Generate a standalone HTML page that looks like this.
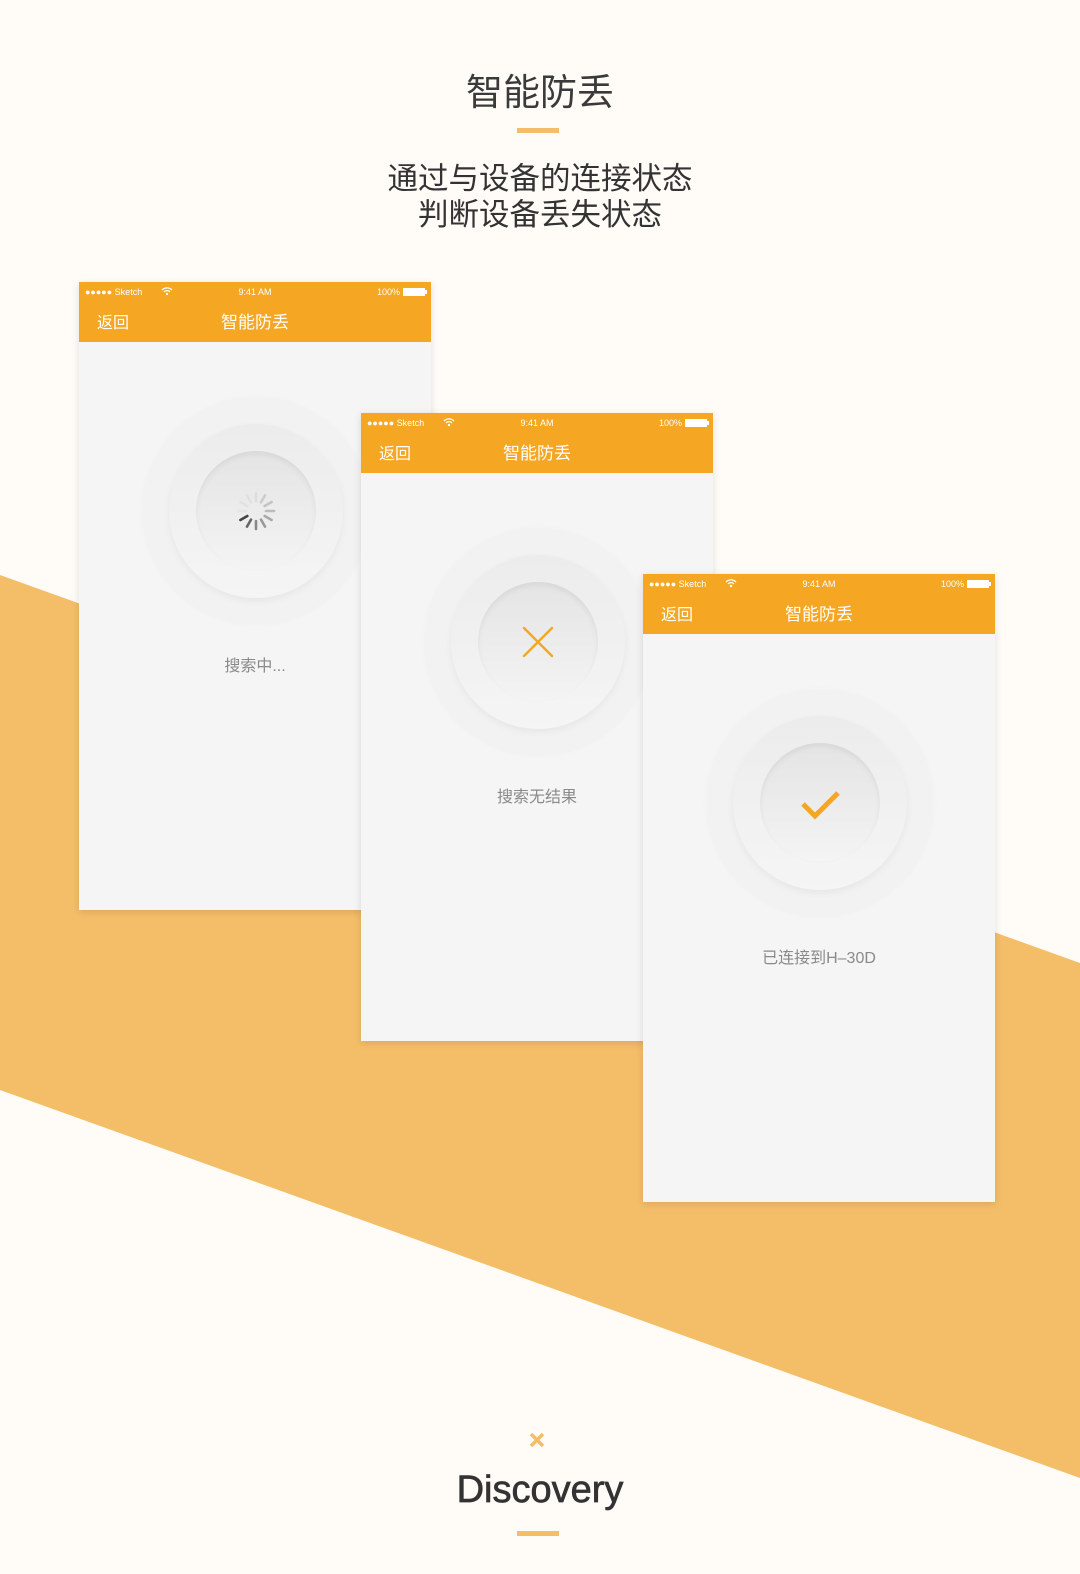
<!DOCTYPE html>
<html><head><meta charset="utf-8"><style>
*{margin:0;padding:0;box-sizing:border-box}
body{width:1080px;height:1574px;background:#fffcf8;position:relative;overflow:hidden;font-family:"Liberation Sans","Noto Sans CJK SC",sans-serif}
.abs{position:absolute}
.h1{left:0;width:1080px;top:68px;text-align:center;font-size:37px;color:#3a3a3a;line-height:50px}
.bar{width:42px;height:5px;background:#f5bd68}
.sub{left:0;width:1080px;top:161px;text-align:center;font-size:30.5px;color:#333;line-height:36px}
.phone{width:352px;height:628px;background:#f5f5f5;box-shadow:0 2px 8px rgba(0,0,0,0.12)}
.hdr{position:absolute;left:0;top:0;width:352px;height:60px;background:#f5a623;color:#fff}
.sb{position:absolute;top:4px;font-size:9px;line-height:12px}
.bat{display:inline-block;width:22px;height:8px;background:#fff;vertical-align:-1px;position:relative}
.bat:after{content:"";position:absolute;right:-2px;top:2px;width:1.5px;height:4px;background:#fff}
.back{position:absolute;left:18px;top:27px;font-size:16px}
.ttl{position:absolute;left:0;width:352px;text-align:center;top:26px;font-size:17px}
.c1,.c2,.c3{position:absolute;border-radius:50%}
.c1{width:228px;height:228px;left:63px;top:115px;background:#f2f2f2;box-shadow:0 0 6px rgba(0,0,0,0.02)}
.c2{width:174px;height:174px;left:90px;top:142px;background:linear-gradient(#ececec,#f5f5f5);box-shadow:0 3px 8px rgba(0,0,0,0.05)}
.c3{width:120px;height:120px;left:117px;top:169px;background:linear-gradient(#e4e4e4,#f4f4f4);box-shadow:inset 0 3px 6px rgba(0,0,0,0.06)}
.icon{position:absolute;left:117px;top:169px;width:120px;height:120px}
.lbl{position:absolute;left:0;width:352px;text-align:center;top:370px;font-size:16px;color:#8a8a8a}
</style></head><body>
<svg class="abs" style="left:0;top:0" width="1080" height="1574"><polygon points="0,575 1080,963 1080,1478 0,1090" fill="#f4be69"/></svg>
<div class="abs h1">智能防丢</div>
<div class="abs bar" style="left:517px;top:128px"></div>
<div class="abs sub">通过与设备的连接状态<br>判断设备丢失状态</div>

<div class="abs phone" style="left:79px;top:282px">
<div class="hdr"><span class="sb" style="left:6px">●●●●● Sketch</span><span class="sb" style="left:82px">
<svg width="12" height="10" viewBox="0 0 12 10"><path d="M1 4a7 7 0 0 1 10 0M3 6a4 4 0 0 1 6 0" stroke="#fff" stroke-width="1.3" fill="none"/><circle cx="6" cy="8" r="1.2" fill="#fff"/></svg></span>
<span class="sb" style="left:0;width:352px;text-align:center">9:41 AM</span><span class="sb" style="left:298px">100% <span class="bat"></span></span>
<span class="back">返回</span><span class="ttl">智能防丢</span></div>
<div class="c1"></div><div class="c2"></div><div class="c3"></div>
<svg class="icon" viewBox="0 0 120 120"><g stroke-width="2.6" stroke-linecap="round">
<line x1="60" y1="42" x2="60" y2="50" stroke="#ddd" transform="rotate(0 60 60)"/>
<line x1="60" y1="42" x2="60" y2="50" stroke="#ccc" transform="rotate(30 60 60)"/>
<line x1="60" y1="42" x2="60" y2="50" stroke="#c4c4c4" transform="rotate(60 60 60)"/>
<line x1="60" y1="42" x2="60" y2="50" stroke="#bbb" transform="rotate(90 60 60)"/>
<line x1="60" y1="42" x2="60" y2="50" stroke="#aaa" transform="rotate(120 60 60)"/>
<line x1="60" y1="42" x2="60" y2="50" stroke="#999" transform="rotate(150 60 60)"/>
<line x1="60" y1="42" x2="60" y2="50" stroke="#888" transform="rotate(180 60 60)"/>
<line x1="60" y1="42" x2="60" y2="50" stroke="#666" transform="rotate(210 60 60)"/>
<line x1="60" y1="42" x2="60" y2="50" stroke="#444" transform="rotate(240 60 60)"/>
<line x1="60" y1="42" x2="60" y2="50" stroke="#e4e4e4" transform="rotate(270 60 60)"/>
<line x1="60" y1="42" x2="60" y2="50" stroke="#e2e2e2" transform="rotate(300 60 60)"/>
<line x1="60" y1="42" x2="60" y2="50" stroke="#e0e0e0" transform="rotate(330 60 60)"/>
</g></svg>
<div class="lbl">搜索中...</div>
</div>

<div class="abs phone" style="left:361px;top:413px">
<div class="hdr"><span class="sb" style="left:6px">●●●●● Sketch</span><span class="sb" style="left:82px">
<svg width="12" height="10" viewBox="0 0 12 10"><path d="M1 4a7 7 0 0 1 10 0M3 6a4 4 0 0 1 6 0" stroke="#fff" stroke-width="1.3" fill="none"/><circle cx="6" cy="8" r="1.2" fill="#fff"/></svg></span>
<span class="sb" style="left:0;width:352px;text-align:center">9:41 AM</span><span class="sb" style="left:298px">100% <span class="bat"></span></span>
<span class="back">返回</span><span class="ttl">智能防丢</span></div>
<div class="c1"></div><div class="c2"></div><div class="c3"></div>
<svg class="icon" viewBox="0 0 120 120"><path d="M46 46L74 74M74 46L46 74" stroke="#f5a623" stroke-width="2.4" stroke-linecap="round"/></svg>
<div class="lbl">搜索无结果</div>
</div>

<div class="abs phone" style="left:643px;top:574px">
<div class="hdr"><span class="sb" style="left:6px">●●●●● Sketch</span><span class="sb" style="left:82px">
<svg width="12" height="10" viewBox="0 0 12 10"><path d="M1 4a7 7 0 0 1 10 0M3 6a4 4 0 0 1 6 0" stroke="#fff" stroke-width="1.3" fill="none"/><circle cx="6" cy="8" r="1.2" fill="#fff"/></svg></span>
<span class="sb" style="left:0;width:352px;text-align:center">9:41 AM</span><span class="sb" style="left:298px">100% <span class="bat"></span></span>
<span class="back">返回</span><span class="ttl">智能防丢</span></div>
<div class="c1"></div><div class="c2"></div><div class="c3"></div>
<svg class="icon" viewBox="0 0 120 120"><path d="M43 61L55 73L78 50" stroke="#f5a623" stroke-width="5" fill="none"/></svg>
<div class="lbl">已连接到H–30D</div>
</div>

<svg class="abs" style="left:528px;top:1431px" width="18" height="18"><path d="M3 3L15 15M15 3L3 15" stroke="#f5bd68" stroke-width="3.4"/></svg>
<div class="abs" style="left:0;width:1080px;top:1466px;text-align:center;font-size:38px;color:#333;line-height:48px;-webkit-text-stroke:0.7px #333">Discovery</div>
<div class="abs bar" style="left:517px;top:1531px"></div>
</body></html>
